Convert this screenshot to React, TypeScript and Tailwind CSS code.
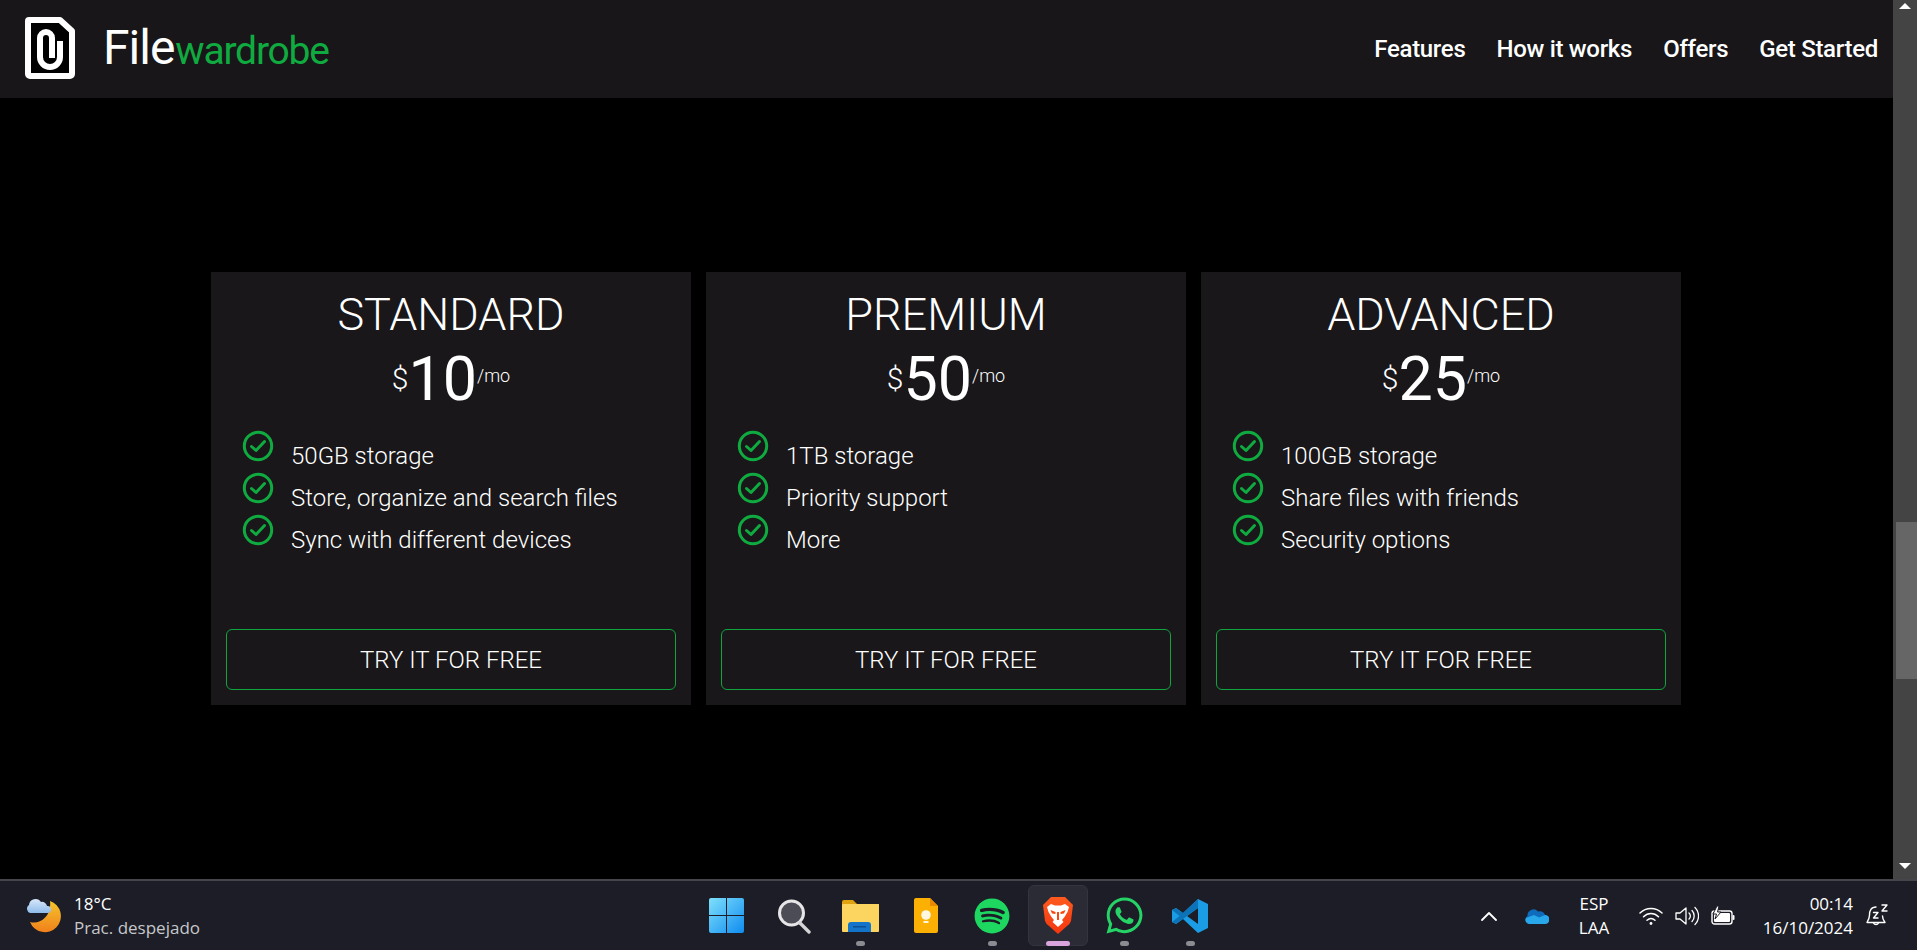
import React from "react";
import { FaSpotify, FaWhatsapp } from "react-icons/fa";

const roboto = "font-['Roboto',sans-serif]";
const segoe = "font-['Open_Sans',sans-serif]";

function Logo() {
  return (
    <svg width="52" height="64" viewBox="0 0 52 64" fill="none" className="shrink-0">
      <path d="M4 3 H35 L47 14 V57 a2 2 0 0 1 -2 2 H5 a2 2 0 0 1 -2 -2 V4 a1 1 0 0 1 1 -1 Z" fill="#000" stroke="#fff" strokeWidth="6" strokeLinejoin="round" />
      <path d="M35 24 V40 a10 10 0 0 1 -20 0 V21 a6 6 0 0 1 12 0 V41" stroke="#fff" strokeWidth="6" />
    </svg>
  );
}

function Check() {
  return (
    <svg width="32" height="32" viewBox="0 0 32 32" fill="none" className="shrink-0">
      <circle cx="16" cy="16" r="13.7" stroke="#10ab40" strokeWidth="3" />
      <path d="M9.5 16.5 L14 20.5 L22.5 11.5" stroke="#10ab40" strokeWidth="3" strokeLinecap="round" strokeLinejoin="round" />
    </svg>
  );
}

function Card({ title, price, items }: { title: string; price: string; items: string[] }) {
  return (
    <div className="w-[480px] h-[433px] bg-[#191719] flex flex-col text-white">
      <h2 className={`${roboto} font-light text-[45px] leading-[52px] text-center mt-[17px]`}>{title}</h2>
      <div className={`${roboto} flex justify-center items-start h-[72px] mt-[2px]`}>
        <span className="font-light text-[30px] leading-[30px] mt-[21px]">$</span>
        <span className="font-normal text-[61px] leading-[72px]">{price}</span>
        <span className="font-light text-[18px] leading-[20px] mt-[23px]">/mo</span>
      </div>
      <ul className="mt-[15px] ml-[31px] flex flex-col">
        {items.map((t) => (
          <li key={t} className="flex h-[42px] items-start gap-[17px]">
            <Check />
            <span className={`${roboto} font-light text-[24px] leading-[30px] mt-[11px] text-white`}>{t}</span>
          </li>
        ))}
      </ul>
      <button className={`${roboto} font-light mt-auto mx-[15px] mb-[15px] h-[61px] rounded-[6px] border border-[#10a53e] text-[24px] text-white`}>
        TRY IT FOR FREE
      </button>
    </div>
  );
}

function Weather() {
  return (
    <svg width="36" height="36" viewBox="0 0 36 36" className="shrink-0">
      <defs>
        <linearGradient id="moon" x1="0" y1="0" x2="0" y2="1">
          <stop offset="0" stopColor="#f5c52e" />
          <stop offset="1" stopColor="#f0801a" />
        </linearGradient>
        <linearGradient id="cloud" x1="0" y1="0" x2="0" y2="1">
          <stop offset="0" stopColor="#d8e8fa" />
          <stop offset="1" stopColor="#8fbcea" />
        </linearGradient>
      </defs>
      <path d="M24 3 A16 16 0 1 1 4 24 C14 27 26 18 24 3 Z" fill="url(#moon)" />
      <path d="M4 15 a4.5 4.5 0 0 1 -1 -8 a6.5 6.5 0 0 1 12 -3 a5 5 0 0 1 6 4 a3.5 3.5 0 0 1 1 7 Z" fill="url(#cloud)" />
    </svg>
  );
}

function Dock({ children, dot, active, className = "" }: { children: React.ReactNode; dot?: boolean; active?: boolean; className?: string }) {
  return (
    <div className="relative w-[66px] h-[69px] flex items-center justify-center">
      {active && <div className="absolute left-[3px] top-[4px] w-[60px] h-[61px] rounded-[6px] bg-[#2a2b35] border border-[#33343e]" />}
      <div className={`relative flex items-center justify-center ${className}`}>{children}</div>
      {dot && <div className="absolute left-[29px] top-[60px] w-[9px] h-[5px] rounded-full bg-[#8b8c92]" />}
      {active && <div className="absolute left-[21px] top-[60px] w-[24px] h-[5px] rounded-full bg-[#d9a3dd]" />}
    </div>
  );
}

function Windows() {
  return (
    <svg width="35" height="35" viewBox="0 0 35 35">
      <defs>
        <linearGradient id="win" x1="0" y1="0" x2="1" y2="1">
          <stop offset="0" stopColor="#7fe0fb" />
          <stop offset="1" stopColor="#0f8cf0" />
        </linearGradient>
      </defs>
      <path d="M2 0 H17 V17 H0 V2 a2 2 0 0 1 2 -2 Z M18 0 H33 a2 2 0 0 1 2 2 V17 H18 Z M0 18 H17 V35 H2 a2 2 0 0 1 -2 -2 Z M18 18 H35 V33 a2 2 0 0 1 -2 2 H18 Z" fill="url(#win)" />
    </svg>
  );
}

function Search() {
  return (
    <svg width="34" height="36" viewBox="0 0 34 36" fill="none">
      <circle cx="14.5" cy="15" r="12" fill="#4b4c55" stroke="#e6e6e8" strokeWidth="3" />
      <path d="M23 25 L32 34" stroke="#d4d4d6" strokeWidth="3.4" strokeLinecap="round" />
    </svg>
  );
}

function Folder() {
  return (
    <svg width="37" height="34" viewBox="0 0 37 34">
      <path d="M0 3 a2 2 0 0 1 2 -2 H11 L15 5 H37 V8 H0 Z" fill="#e0a30f" />
      <rect x="0" y="5" width="37" height="28" rx="1" fill="#fbd55f" />
      <path d="M6 33 V26 a3 3 0 0 1 3 -3 H26 a3 3 0 0 1 3 3 V33 Z" fill="#1374c9" />
      <rect x="11" y="27" width="13" height="1.5" fill="#0c4f94" />
    </svg>
  );
}

function Keep() {
  return (
    <svg width="24" height="35" viewBox="0 0 24 35">
      <path d="M2 0 H16 L24 8 V33 a2 2 0 0 1 -2 2 H2 a2 2 0 0 1 -2 -2 V2 a2 2 0 0 1 2 -2 Z" fill="#fbb003" />
      <path d="M16 0 L24 8 H16 Z" fill="#e98a00" />
      <circle cx="12" cy="17" r="4.8" fill="#fff7df" />
      <rect x="9.5" y="23" width="5" height="2" fill="#fff7df" />
    </svg>
  );
}

function Brave() {
  return (
    <svg width="30" height="37" viewBox="0 0 30 37">
      <defs>
        <linearGradient id="brave" x1="0" y1="0" x2="0" y2="1">
          <stop offset="0" stopColor="#ff5a1f" />
          <stop offset="1" stopColor="#f5360f" />
        </linearGradient>
      </defs>
      <path d="M8 0 H22 L26 4 L30 8 L28 24 Q27 27 24 29 L15 37 L6 29 Q3 27 2 24 L0 8 L4 4 Z" fill="url(#brave)" />
      <path d="M8 7 L12 8.5 H18 L22 7 L26 10 L24.5 15 L21.5 20 L19 23 L20.5 25 L15 30 L9.5 25 L11 23 L8.5 20 L5.5 15 L4 10 Z" fill="#fff" />
      <path d="M7.5 13 L12.5 15 L12.5 17 L9 16.5 Z M22.5 13 L17.5 15 L17.5 17 L21 16.5 Z M14 15 H16 V23 H14 Z" fill="#f5480f" />
    </svg>
  );
}

function VSCode() {
  return (
    <svg width="36" height="36" viewBox="0 0 36 36">
      <path d="M26 1 L36 6 V30 L26 35 L11 21 L4 26 L0 24 V12 L4 10 L11 15 Z M26 10 L15 18 L26 26 Z" fill="#1b9de6" fillRule="evenodd" />
      <path d="M26 1 L11 15 L4 10 L0 12 L7.5 18 L0 24 L4 26 L26 10 Z" fill="#0d73b8" />
    </svg>
  );
}

function OneDrive() {
  return (
    <svg width="24" height="16" viewBox="0 0 24 16">
      <path d="M4 15.5 A4 4 0 0 1 2.5 8 A6 6 0 0 1 13 3.5 A6 6 0 0 1 20 7 A4.5 4.5 0 0 1 20 15.5 Z" fill="#0f6cbd" />
      <path d="M4 16 A4 4 0 0 1 1 10 L9 7 L14 9.5 L20 7 A4.5 4.5 0 0 1 20 16 Z" fill="#28a8ea" />
    </svg>
  );
}

function Wifi() {
  return (
    <svg width="24" height="20" viewBox="0 0 24 20" fill="none" stroke="#fff" strokeWidth="1.5" strokeLinecap="round">
      <path d="M1 7 C7 1 17 1 23 7" />
      <path d="M4.5 10.8 C9 6.5 15 6.5 19.5 10.8" />
      <path d="M8 14.3 C10.5 12 13.5 12 16 14.3" />
      <circle cx="12" cy="17.5" r="1.4" fill="#fff" stroke="none" />
    </svg>
  );
}

function Speaker() {
  return (
    <svg width="24" height="20" viewBox="0 0 24 20" fill="none" stroke="#fff" strokeWidth="1.3" strokeLinecap="round" strokeLinejoin="round">
      <path d="M1 7 H5 L11 2 V18 L5 13 H1 Z" />
      <path d="M14 7 a4 4 0 0 1 0 6" />
      <path d="M17 4.5 a8 8 0 0 1 0 11" />
      <path d="M20 1.5 a12 12 0 0 1 0 17" />
    </svg>
  );
}

function Battery() {
  return (
    <svg width="24" height="20" viewBox="0 0 24 20" fill="none">
      <rect x="1" y="5" width="20" height="13" rx="2.5" stroke="#fff" strokeWidth="1.4" />
      <rect x="3" y="7" width="16" height="9" rx="1" fill="#fff" />
      <rect x="21.5" y="9" width="2" height="5" rx="1" fill="#fff" />
      <path d="M6 0 L2 8 H5.5 L4 13 L10 6 H6.5 L8 0 Z" fill="#fff" stroke="#1c1d26" strokeWidth="1" />
    </svg>
  );
}

function Bell() {
  return (
    <svg width="22" height="24" viewBox="0 0 22 24" fill="none" stroke="#fff" strokeWidth="1.4" strokeLinecap="round" strokeLinejoin="round">
      <path d="M10 3 C5 3 3.5 7 3.5 11 C3.5 14 2.5 16 1 18.5 H19 C17.5 16.5 16.5 14.5 16.5 12" />
      <path d="M7.5 19 a2.8 2.8 0 0 0 5 0" />
      <path d="M7.5 8.5 H12 L7.5 14 H12" />
      <path d="M16 1 H21 L16 7 H21" />
    </svg>
  );
}

export default function App() {
  return (
    <div className="w-[1917px] h-[950px] flex flex-col overflow-hidden bg-black">
      <div className="flex h-[879px]">
        <div className="w-[1893px] flex flex-col">
          <header className="h-[98px] bg-[#181618] flex items-center justify-between pl-[25px] pr-[15px]">
            <div className="flex items-center">
              <Logo />
              <div className={`${roboto} ml-[26px] flex items-baseline text-white`}>
                <span className="text-[48px] leading-[56px] font-normal tracking-[-1px]">File</span>
                <span className="text-[39px] leading-[56px] font-normal text-[#10ab40] ml-[1px] tracking-[-1.2px]">wardrobe</span>
              </div>
            </div>
            <nav className={`${roboto} flex gap-[31px] text-white text-[24px] font-medium tracking-[-0.3px]`}>
              <span>Features</span>
              <span>How it works</span>
              <span>Offers</span>
              <span>Get Started</span>
            </nav>
          </header>
          <main className="flex gap-[15px] pt-[174px] pl-[211px]">
            <Card title="STANDARD" price="10" items={["50GB storage", "Store, organize and search files", "Sync with different devices"]} />
            <Card title="PREMIUM" price="50" items={["1TB storage", "Priority support", "More"]} />
            <Card title="ADVANCED" price="25" items={["100GB storage", "Share files with friends", "Security options"]} />
          </main>
        </div>
        <div className="w-[24px] bg-[#444444] flex flex-col items-center">
          <div className="mt-[3px] w-0 h-0 border-l-[6px] border-r-[6px] border-b-[6px] border-l-transparent border-r-transparent border-b-white" />
          <div className="mt-[513px] ml-[2px] w-[21px] h-[157px] bg-[#666666]" />
          <div className="mt-[184px] w-0 h-0 border-l-[6px] border-r-[6px] border-t-[6px] border-l-transparent border-r-transparent border-t-white" />
        </div>
      </div>
      <footer className={`${segoe} h-[71px] bg-[#1c1d26] border-t-2 border-[#45464b] flex items-center text-white`}>
        <div className="flex items-center w-[695px] pl-[26px] gap-[12px]">
          <Weather />
          <div className="flex flex-col">
            <span className="text-[17px] leading-[24px]">18°C</span>
            <span className="text-[17px] leading-[24px] text-[#c6c7ca]">Prac. despejado</span>
          </div>
        </div>
        <div className="flex">
          <Dock className="mr-[4px]"><Windows /></Dock>
          <Dock><Search /></Dock>
          <Dock dot><Folder /></Dock>
          <Dock><Keep /></Dock>
          <Dock dot><FaSpotify size={36} color="#1ed760" /></Dock>
          <Dock active><Brave /></Dock>
          <Dock dot><FaWhatsapp size={41} color="#25d366" /></Dock>
          <Dock dot><VSCode /></Dock>
        </div>
        <div className="flex items-center flex-1 pl-[258px]">
          <svg width="16" height="10" viewBox="0 0 16 10" fill="none" stroke="#fff" strokeWidth="1.8" strokeLinecap="round" strokeLinejoin="round">
            <path d="M1 9 L8 2 L15 9" />
          </svg>
          <div className="ml-[28px]"><OneDrive /></div>
          <div className="ml-[25px] w-[40px] flex flex-col items-center text-[17px] leading-[24px]">
            <span>ESP</span>
            <span>LAA</span>
          </div>
          <div className="ml-[25px] flex items-center gap-[12px]">
            <Wifi />
            <Speaker />
            <Battery />
          </div>
          <div className="ml-[26px] w-[92px] flex flex-col items-end text-[17px] leading-[24px] whitespace-nowrap">
            <span>00:14</span>
            <span>16/10/2024</span>
          </div>
          <div className="ml-[13px]"><Bell /></div>
        </div>
      </footer>
    </div>
  );
}
